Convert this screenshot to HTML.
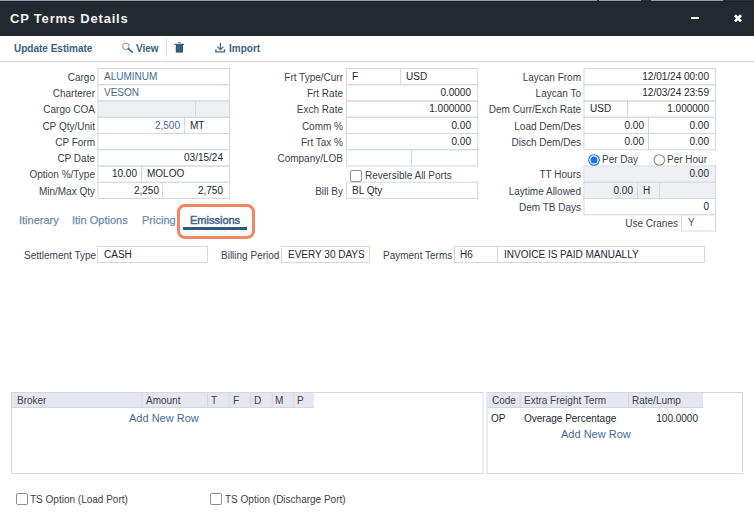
<!DOCTYPE html><html><head><meta charset="utf-8"><style>
html,body{margin:0;padding:0;}
body{width:754px;height:514px;position:relative;overflow:hidden;background:#fff;font-family:"Liberation Sans", sans-serif;}
.bx{position:absolute;box-sizing:border-box;border:1px solid #d4d9e1;}
.ln{position:absolute;}
.t{position:absolute;white-space:nowrap;line-height:12px;}
</style></head><body>
<div class="ln" style="left:0;top:0;width:754px;height:36px;background:#232930"></div>
<div class="ln" style="left:0;top:0;width:754px;height:1px;background:#989ca0"></div>
<div class="ln" style="left:0;top:1px;width:754px;height:1px;background:#1b2228"></div>
<div class="ln" style="left:597px;top:0;width:2px;height:1px;background:#2a3238"></div>
<div class="ln" style="left:641px;top:0;width:10px;height:1px;background:#2a3238"></div>
<div class="ln" style="left:723px;top:0;width:31px;height:1px;background:#2a3238"></div>
<div class="t" style="left:10px;top:11px;color:#f2f4f6;font-size:13px;font-weight:bold;line-height:15px;letter-spacing:0.8px">CP Terms Details</div>
<div class="ln" style="left:691px;top:17px;width:8px;height:2px;background:#fff"></div>
<svg style="position:absolute;left:732px;top:13px" width="12" height="11" viewBox="0 0 12 11"><path d="M2.9 2.3 L9.0 8.4 M9.0 2.3 L2.9 8.4" stroke="#fff" stroke-width="2.7" stroke-linecap="butt"/></svg>
<div class="t" style="left:14px;top:43px;color:#3b5f80;font-size:10px;font-weight:bold;">Update Estimate</div>
<svg style="position:absolute;left:118px;top:40px" width="20" height="15" viewBox="0 0 20 15"><circle cx="7.9" cy="6.3" r="3.3" fill="none" stroke="#7d90b0" stroke-width="1"/><path d="M10.3 8.6 L14.4 12.3" stroke="#3e5f80" stroke-width="1.5" stroke-linecap="round"/></svg>
<div class="t" style="left:136px;top:43px;color:#3b5f80;font-size:10px;font-weight:bold;">View</div>
<div class="ln" style="left:166px;top:39px;width:1px;height:18px;background:#d9dde3"></div>
<svg style="position:absolute;left:170px;top:40px" width="20" height="15" viewBox="0 0 20 15"><rect x="7.9" y="2" width="3" height="1.2" fill="#7f95ad"/><rect x="4.4" y="3.8" width="9.6" height="1.1" fill="#2f5575"/><rect x="5.8" y="4.8" width="7.2" height="7.8" fill="#2f5575"/><rect x="7.2" y="6" width="0.6" height="5.5" fill="#4d7290"/><rect x="9.1" y="6" width="0.6" height="5.5" fill="#4d7290"/><rect x="10.9" y="6" width="0.6" height="5.5" fill="#4d7290"/></svg>
<svg style="position:absolute;left:210px;top:40px" width="20" height="15" viewBox="0 0 20 15"><path d="M10.4 2.8 V9.3" stroke="#3b6288" stroke-width="1.2"/><path d="M7.3 6.6 L10.4 9.6 L13.4 6.6" stroke="#3b6288" stroke-width="1.2" fill="none"/><path d="M5.9 9.3 V11.9 H14.5 V9.3" stroke="#4a6585" stroke-width="1.4" fill="none" stroke-linejoin="round"/></svg>
<div class="t" style="left:229px;top:43px;color:#3b5f80;font-size:10px;font-weight:bold;">Import</div>
<div class="ln" style="left:0;top:61px;width:754px;height:1px;background:#cdd3da"></div>
<svg style="position:absolute;left:0;top:0" width="754" height="514"><rect x="97.5" y="68.0" width="132.5" height="1" fill="#d4d9e1"/><rect x="97.5" y="84.25" width="132.5" height="1" fill="#d4d9e1"/><rect x="97.5" y="68.0" width="1" height="17.25" fill="#d4d9e1"/><rect x="229" y="68.0" width="1" height="17.25" fill="#d4d9e1"/><rect x="97.5" y="84.25" width="132.5" height="1" fill="#d4d9e1"/><rect x="97.5" y="100.5" width="132.5" height="1" fill="#d4d9e1"/><rect x="97.5" y="84.25" width="1" height="17.25" fill="#d4d9e1"/><rect x="229" y="84.25" width="1" height="17.25" fill="#d4d9e1"/><rect x="98.5" y="101.5" width="130.5" height="15.25" fill="#eef0f3"/><rect x="97.5" y="100.5" width="132.5" height="1" fill="#d4d9e1"/><rect x="97.5" y="116.75" width="132.5" height="1" fill="#d4d9e1"/><rect x="97.5" y="100.5" width="1" height="17.25" fill="#d4d9e1"/><rect x="229" y="100.5" width="1" height="17.25" fill="#d4d9e1"/><rect x="97.5" y="116.75" width="132.5" height="1" fill="#d4d9e1"/><rect x="97.5" y="133.0" width="132.5" height="1" fill="#d4d9e1"/><rect x="97.5" y="116.75" width="1" height="17.25" fill="#d4d9e1"/><rect x="229" y="116.75" width="1" height="17.25" fill="#d4d9e1"/><rect x="97.5" y="133.0" width="132.5" height="1" fill="#d4d9e1"/><rect x="97.5" y="149.25" width="132.5" height="1" fill="#d4d9e1"/><rect x="97.5" y="133.0" width="1" height="17.25" fill="#d4d9e1"/><rect x="229" y="133.0" width="1" height="17.25" fill="#d4d9e1"/><rect x="97.5" y="149.25" width="132.5" height="1" fill="#d4d9e1"/><rect x="97.5" y="165.5" width="132.5" height="1" fill="#d4d9e1"/><rect x="97.5" y="149.25" width="1" height="17.25" fill="#d4d9e1"/><rect x="229" y="149.25" width="1" height="17.25" fill="#d4d9e1"/><rect x="97.5" y="165.5" width="132.5" height="1" fill="#d4d9e1"/><rect x="97.5" y="181.75" width="132.5" height="1" fill="#d4d9e1"/><rect x="97.5" y="165.5" width="1" height="17.25" fill="#d4d9e1"/><rect x="229" y="165.5" width="1" height="17.25" fill="#d4d9e1"/><rect x="97.5" y="181.75" width="132.5" height="1" fill="#d4d9e1"/><rect x="97.5" y="198.0" width="132.5" height="1" fill="#d4d9e1"/><rect x="97.5" y="181.75" width="1" height="17.25" fill="#d4d9e1"/><rect x="229" y="181.75" width="1" height="17.25" fill="#d4d9e1"/><rect x="195" y="100.5" width="1" height="17.25" fill="#d4d9e1"/><rect x="184" y="116.75" width="1" height="17.25" fill="#d4d9e1"/><rect x="141" y="165.5" width="1" height="17.25" fill="#d4d9e1"/><rect x="162" y="181.75" width="1" height="17.25" fill="#d4d9e1"/><rect x="346" y="68.0" width="132.25" height="1" fill="#d4d9e1"/><rect x="346" y="84.25" width="132.25" height="1" fill="#d4d9e1"/><rect x="346" y="68.0" width="1" height="17.25" fill="#d4d9e1"/><rect x="477.25" y="68.0" width="1" height="17.25" fill="#d4d9e1"/><rect x="346" y="84.25" width="132.25" height="1" fill="#d4d9e1"/><rect x="346" y="100.5" width="132.25" height="1" fill="#d4d9e1"/><rect x="346" y="84.25" width="1" height="17.25" fill="#d4d9e1"/><rect x="477.25" y="84.25" width="1" height="17.25" fill="#d4d9e1"/><rect x="346" y="100.5" width="132.25" height="1" fill="#d4d9e1"/><rect x="346" y="116.75" width="132.25" height="1" fill="#d4d9e1"/><rect x="346" y="100.5" width="1" height="17.25" fill="#d4d9e1"/><rect x="477.25" y="100.5" width="1" height="17.25" fill="#d4d9e1"/><rect x="346" y="116.75" width="132.25" height="1" fill="#d4d9e1"/><rect x="346" y="133.0" width="132.25" height="1" fill="#d4d9e1"/><rect x="346" y="116.75" width="1" height="17.25" fill="#d4d9e1"/><rect x="477.25" y="116.75" width="1" height="17.25" fill="#d4d9e1"/><rect x="346" y="133.0" width="132.25" height="1" fill="#d4d9e1"/><rect x="346" y="149.25" width="132.25" height="1" fill="#d4d9e1"/><rect x="346" y="133.0" width="1" height="17.25" fill="#d4d9e1"/><rect x="477.25" y="133.0" width="1" height="17.25" fill="#d4d9e1"/><rect x="346" y="149.25" width="132.25" height="1" fill="#d4d9e1"/><rect x="346" y="165.5" width="132.25" height="1" fill="#d4d9e1"/><rect x="346" y="149.25" width="1" height="17.25" fill="#d4d9e1"/><rect x="477.25" y="149.25" width="1" height="17.25" fill="#d4d9e1"/><rect x="400" y="68.0" width="1" height="17.25" fill="#d4d9e1"/><rect x="411" y="149.25" width="1" height="17.25" fill="#d4d9e1"/><rect x="346" y="181.75" width="132.25" height="1" fill="#d4d9e1"/><rect x="346" y="198.0" width="132.25" height="1" fill="#d4d9e1"/><rect x="346" y="181.75" width="1" height="17.25" fill="#d4d9e1"/><rect x="477.25" y="181.75" width="1" height="17.25" fill="#d4d9e1"/><rect x="583.5" y="68.0" width="132.5" height="1" fill="#d4d9e1"/><rect x="583.5" y="84.25" width="132.5" height="1" fill="#d4d9e1"/><rect x="583.5" y="68.0" width="1" height="17.25" fill="#d4d9e1"/><rect x="715" y="68.0" width="1" height="17.25" fill="#d4d9e1"/><rect x="583.5" y="84.25" width="132.5" height="1" fill="#d4d9e1"/><rect x="583.5" y="100.5" width="132.5" height="1" fill="#d4d9e1"/><rect x="583.5" y="84.25" width="1" height="17.25" fill="#d4d9e1"/><rect x="715" y="84.25" width="1" height="17.25" fill="#d4d9e1"/><rect x="583.5" y="100.5" width="132.5" height="1" fill="#d4d9e1"/><rect x="583.5" y="116.75" width="132.5" height="1" fill="#d4d9e1"/><rect x="583.5" y="100.5" width="1" height="17.25" fill="#d4d9e1"/><rect x="715" y="100.5" width="1" height="17.25" fill="#d4d9e1"/><rect x="583.5" y="116.75" width="132.5" height="1" fill="#d4d9e1"/><rect x="583.5" y="133.0" width="132.5" height="1" fill="#d4d9e1"/><rect x="583.5" y="116.75" width="1" height="17.25" fill="#d4d9e1"/><rect x="715" y="116.75" width="1" height="17.25" fill="#d4d9e1"/><rect x="583.5" y="133.0" width="132.5" height="1" fill="#d4d9e1"/><rect x="583.5" y="149.25" width="132.5" height="1" fill="#d4d9e1"/><rect x="583.5" y="133.0" width="1" height="17.25" fill="#d4d9e1"/><rect x="715" y="133.0" width="1" height="17.25" fill="#d4d9e1"/><rect x="584.5" y="166.5" width="130.5" height="15.25" fill="#eef0f3"/><rect x="583.5" y="165.5" width="132.5" height="1" fill="#d4d9e1"/><rect x="583.5" y="181.75" width="132.5" height="1" fill="#d4d9e1"/><rect x="583.5" y="165.5" width="1" height="17.25" fill="#d4d9e1"/><rect x="715" y="165.5" width="1" height="17.25" fill="#d4d9e1"/><rect x="584.5" y="182.75" width="130.5" height="15.25" fill="#eef0f3"/><rect x="583.5" y="181.75" width="132.5" height="1" fill="#d4d9e1"/><rect x="583.5" y="198.0" width="132.5" height="1" fill="#d4d9e1"/><rect x="583.5" y="181.75" width="1" height="17.25" fill="#d4d9e1"/><rect x="715" y="181.75" width="1" height="17.25" fill="#d4d9e1"/><rect x="583.5" y="198.0" width="132.5" height="1" fill="#d4d9e1"/><rect x="583.5" y="214.25" width="132.5" height="1" fill="#d4d9e1"/><rect x="583.5" y="198.0" width="1" height="17.25" fill="#d4d9e1"/><rect x="715" y="198.0" width="1" height="17.25" fill="#d4d9e1"/><rect x="627" y="100.5" width="1" height="17.25" fill="#d4d9e1"/><rect x="648" y="116.75" width="1" height="17.25" fill="#d4d9e1"/><rect x="648" y="133.0" width="1" height="17.25" fill="#d4d9e1"/><rect x="637" y="181.75" width="1" height="17.25" fill="#d4d9e1"/><rect x="659" y="181.75" width="1" height="17.25" fill="#d4d9e1"/><rect x="681" y="214.25" width="35" height="1" fill="#d4d9e1"/><rect x="681" y="230.5" width="35" height="1" fill="#d4d9e1"/><rect x="681" y="214.25" width="1" height="17.25" fill="#d4d9e1"/><rect x="715" y="214.25" width="1" height="17.25" fill="#d4d9e1"/></svg>
<div class="t" style="right:659px;top:72px;color:#3b3f4a;font-size:10px;font-weight:normal;text-align:right;">Cargo</div>
<div class="t" style="right:659px;top:88px;color:#3b3f4a;font-size:10px;font-weight:normal;text-align:right;">Charterer</div>
<div class="t" style="right:659px;top:104px;color:#3b3f4a;font-size:10px;font-weight:normal;text-align:right;">Cargo COA</div>
<div class="t" style="right:659px;top:121px;color:#3b3f4a;font-size:10px;font-weight:normal;text-align:right;">CP Qty/Unit</div>
<div class="t" style="right:659px;top:137px;color:#3b3f4a;font-size:10px;font-weight:normal;text-align:right;">CP Form</div>
<div class="t" style="right:659px;top:153px;color:#3b3f4a;font-size:10px;font-weight:normal;text-align:right;">CP Date</div>
<div class="t" style="right:659px;top:169px;color:#3b3f4a;font-size:10px;font-weight:normal;text-align:right;">Option %/Type</div>
<div class="t" style="right:659px;top:186px;color:#3b3f4a;font-size:10px;font-weight:normal;text-align:right;">Min/Max Qty</div>
<div class="t" style="left:104px;top:71px;color:#466d95;font-size:10px;font-weight:normal;">ALUMINUM</div>
<div class="t" style="left:104px;top:87px;color:#466d95;font-size:10px;font-weight:normal;">VESON</div>
<div class="t" style="right:574px;top:120px;color:#466d95;font-size:10px;font-weight:normal;text-align:right;">2,500</div>
<div class="t" style="left:190px;top:120px;color:#222831;font-size:10px;font-weight:normal;">MT</div>
<div class="t" style="right:531px;top:152px;color:#222831;font-size:10px;font-weight:normal;text-align:right;">03/15/24</div>
<div class="t" style="right:617px;top:168px;color:#222831;font-size:10px;font-weight:normal;text-align:right;">10.00</div>
<div class="t" style="left:147px;top:168px;color:#222831;font-size:10px;font-weight:normal;">MOLOO</div>
<div class="t" style="right:595px;top:185px;color:#222831;font-size:10px;font-weight:normal;text-align:right;">2,250</div>
<div class="t" style="right:531px;top:185px;color:#222831;font-size:10px;font-weight:normal;text-align:right;">2,750</div>
<div class="t" style="right:411px;top:72px;color:#3b3f4a;font-size:10px;font-weight:normal;text-align:right;">Frt Type/Curr</div>
<div class="t" style="right:411px;top:88px;color:#3b3f4a;font-size:10px;font-weight:normal;text-align:right;">Frt Rate</div>
<div class="t" style="right:411px;top:104px;color:#3b3f4a;font-size:10px;font-weight:normal;text-align:right;">Exch Rate</div>
<div class="t" style="right:411px;top:121px;color:#3b3f4a;font-size:10px;font-weight:normal;text-align:right;">Comm %</div>
<div class="t" style="right:411px;top:137px;color:#3b3f4a;font-size:10px;font-weight:normal;text-align:right;">Frt Tax %</div>
<div class="t" style="right:411px;top:153px;color:#3b3f4a;font-size:10px;font-weight:normal;text-align:right;">Company/LOB</div>
<div class="t" style="left:352px;top:71px;color:#222831;font-size:10px;font-weight:normal;">F</div>
<div class="t" style="left:406px;top:71px;color:#222831;font-size:10px;font-weight:normal;">USD</div>
<div class="t" style="right:283px;top:87px;color:#222831;font-size:10px;font-weight:normal;text-align:right;">0.0000</div>
<div class="t" style="right:283px;top:103px;color:#222831;font-size:10px;font-weight:normal;text-align:right;">1.000000</div>
<div class="t" style="right:283px;top:120px;color:#222831;font-size:10px;font-weight:normal;text-align:right;">0.00</div>
<div class="t" style="right:283px;top:136px;color:#222831;font-size:10px;font-weight:normal;text-align:right;">0.00</div>
<div class="bx" style="left:350px;top:170px;width:12px;height:12px;border-color:#8c9096;border-radius:2px"></div>
<div class="t" style="left:365px;top:170px;color:#3b3f4a;font-size:10px;font-weight:normal;">Reversible All Ports</div>
<div class="t" style="right:411px;top:186px;color:#3b3f4a;font-size:10px;font-weight:normal;text-align:right;">Bill By</div>
<div class="t" style="left:352px;top:185px;color:#222831;font-size:10px;font-weight:normal;">BL Qty</div>
<div class="t" style="right:173px;top:72px;color:#3b3f4a;font-size:10px;font-weight:normal;text-align:right;">Laycan From</div>
<div class="t" style="right:173px;top:88px;color:#3b3f4a;font-size:10px;font-weight:normal;text-align:right;">Laycan To</div>
<div class="t" style="right:173px;top:104px;color:#3b3f4a;font-size:10px;font-weight:normal;text-align:right;">Dem Curr/Exch Rate</div>
<div class="t" style="right:173px;top:121px;color:#3b3f4a;font-size:10px;font-weight:normal;text-align:right;">Load Dem/Des</div>
<div class="t" style="right:173px;top:137px;color:#3b3f4a;font-size:10px;font-weight:normal;text-align:right;">Disch Dem/Des</div>
<div class="t" style="right:173px;top:169px;color:#3b3f4a;font-size:10px;font-weight:normal;text-align:right;">TT Hours</div>
<div class="t" style="right:173px;top:186px;color:#3b3f4a;font-size:10px;font-weight:normal;text-align:right;">Laytime Allowed</div>
<div class="t" style="right:173px;top:202px;color:#3b3f4a;font-size:10px;font-weight:normal;text-align:right;">Dem TB Days</div>
<div class="t" style="right:45px;top:71px;color:#222831;font-size:10px;font-weight:normal;text-align:right;">12/01/24 00:00</div>
<div class="t" style="right:45px;top:87px;color:#222831;font-size:10px;font-weight:normal;text-align:right;">12/03/24 23:59</div>
<div class="t" style="left:590px;top:103px;color:#222831;font-size:10px;font-weight:normal;">USD</div>
<div class="t" style="right:45px;top:103px;color:#222831;font-size:10px;font-weight:normal;text-align:right;">1.000000</div>
<div class="t" style="right:110px;top:120px;color:#222831;font-size:10px;font-weight:normal;text-align:right;">0.00</div>
<div class="t" style="right:45px;top:120px;color:#222831;font-size:10px;font-weight:normal;text-align:right;">0.00</div>
<div class="t" style="right:110px;top:136px;color:#222831;font-size:10px;font-weight:normal;text-align:right;">0.00</div>
<div class="t" style="right:45px;top:136px;color:#222831;font-size:10px;font-weight:normal;text-align:right;">0.00</div>
<div class="t" style="right:45px;top:168px;color:#222831;font-size:10px;font-weight:normal;text-align:right;">0.00</div>
<div class="t" style="right:121px;top:185px;color:#222831;font-size:10px;font-weight:normal;text-align:right;">0.00</div>
<div class="t" style="left:643px;top:185px;color:#222831;font-size:10px;font-weight:normal;">H</div>
<div class="t" style="right:45px;top:201px;color:#222831;font-size:10px;font-weight:normal;text-align:right;">0</div>
<svg style="position:absolute;left:586px;top:152px" width="16" height="16" viewBox="0 0 16 16"><circle cx="8" cy="8" r="5.3" fill="#fff" stroke="#1a73e8" stroke-width="1.1"/><circle cx="8" cy="8" r="3.5" fill="#1a73e8"/></svg>
<div class="t" style="left:602px;top:154px;color:#3b3f4a;font-size:10px;font-weight:normal;">Per Day</div>
<svg style="position:absolute;left:651px;top:152px" width="16" height="16" viewBox="0 0 16 16"><circle cx="8.3" cy="8" r="5.3" fill="#fff" stroke="#858a90" stroke-width="1.1"/></svg>
<div class="t" style="left:667px;top:154px;color:#3b3f4a;font-size:10px;font-weight:normal;">Per Hour</div>
<div class="t" style="right:76px;top:218px;color:#3b3f4a;font-size:10px;font-weight:normal;text-align:right;">Use Cranes</div>
<div class="t" style="left:688px;top:217px;color:#555;font-size:10px;font-weight:normal;">Y</div>
<div class="t" style="left:19px;top:214px;color:#6d8eab;font-size:11px;font-weight:normal;-webkit-text-stroke:0.25px #6d8eab">Itinerary</div>
<div class="t" style="left:72px;top:214px;color:#6d8eab;font-size:11px;font-weight:normal;-webkit-text-stroke:0.25px #6d8eab">Itin Options</div>
<div class="t" style="left:142px;top:214px;color:#6d8eab;font-size:11px;font-weight:normal;-webkit-text-stroke:0.25px #6d8eab">Pricing</div>
<div class="t" style="left:190px;top:214px;color:#3d6485;font-size:11px;font-weight:normal;-webkit-text-stroke:0.45px #3d6485">Emissions</div>
<div class="ln" style="left:183px;top:227px;width:64px;height:3px;background:#2d5b7c"></div>
<div class="ln" style="left:177px;top:204px;width:78px;height:35px;box-sizing:border-box;border:3.6px solid #f3865e;border-radius:8px"></div>
<div class="t" style="left:24px;top:250px;color:#3b3f4a;font-size:10px;font-weight:normal;">Settlement Type</div>
<div class="bx" style="left:97px;top:246px;width:111px;height:17px;background:#fff;"></div>
<div class="t" style="left:104px;top:249px;color:#222831;font-size:10px;font-weight:normal;">CASH</div>
<div class="t" style="left:221px;top:250px;color:#3b3f4a;font-size:10px;font-weight:normal;">Billing Period</div>
<div class="bx" style="left:281px;top:246px;width:89px;height:17px;background:#fff;"></div>
<div class="t" style="left:288px;top:249px;color:#222831;font-size:10px;font-weight:normal;">EVERY 30 DAYS</div>
<div class="t" style="left:383px;top:250px;color:#3b3f4a;font-size:10px;font-weight:normal;">Payment Terms</div>
<div class="bx" style="left:454px;top:246px;width:251px;height:17px;background:#fff;"></div>
<div class="ln" style="left:497px;top:246px;width:1px;height:17px;background:#d4d9e1"></div>
<div class="t" style="left:460px;top:249px;color:#222831;font-size:10px;font-weight:normal;">H6</div>
<div class="t" style="left:504px;top:249px;color:#222831;font-size:10px;font-weight:normal;">INVOICE IS PAID MANUALLY</div>
<svg style="position:absolute;left:0;top:0" width="754" height="514"><rect x="12" y="393" width="302" height="14" fill="#e5e7f0"/><rect x="12" y="407" width="302" height="1" fill="#d3d7df"/><rect x="141.5" y="393" width="1" height="14" fill="#d3d7df"/><rect x="207" y="393" width="1" height="14" fill="#d3d7df"/><rect x="228.6" y="393" width="1" height="14" fill="#d3d7df"/><rect x="250.2" y="393" width="1" height="14" fill="#d3d7df"/><rect x="271.8" y="393" width="1" height="14" fill="#d3d7df"/><rect x="293.3" y="393" width="1" height="14" fill="#d3d7df"/><rect x="11" y="392" width="472.5" height="1" fill="#d4d9e1"/><rect x="11" y="473" width="472.5" height="1" fill="#d4d9e1"/><rect x="11" y="392" width="1" height="82" fill="#d4d9e1"/><rect x="482.5" y="392" width="1" height="82" fill="#d4d9e1"/><rect x="487.5" y="393" width="215.5" height="14" fill="#e5e7f0"/><rect x="487.5" y="407" width="215.5" height="1" fill="#d3d7df"/><rect x="519.7" y="393" width="1" height="14" fill="#d3d7df"/><rect x="628" y="393" width="1" height="14" fill="#d3d7df"/><rect x="486.5" y="392" width="256.5" height="1" fill="#d4d9e1"/><rect x="486.5" y="473" width="256.5" height="1" fill="#d4d9e1"/><rect x="486.5" y="392" width="1" height="82" fill="#d4d9e1"/><rect x="742" y="392" width="1" height="82" fill="#d4d9e1"/></svg>
<div class="t" style="left:17px;top:395px;color:#3a3f48;font-size:10px;font-weight:normal;">Broker</div>
<div class="t" style="left:146px;top:395px;color:#3a3f48;font-size:10px;font-weight:normal;">Amount</div>
<div class="t" style="left:211px;top:395px;color:#3a3f48;font-size:10px;font-weight:normal;">T</div>
<div class="t" style="left:233px;top:395px;color:#3a3f48;font-size:10px;font-weight:normal;">F</div>
<div class="t" style="left:254px;top:395px;color:#3a3f48;font-size:10px;font-weight:normal;">D</div>
<div class="t" style="left:275px;top:395px;color:#3a3f48;font-size:10px;font-weight:normal;">M</div>
<div class="t" style="left:297px;top:395px;color:#3a3f48;font-size:10px;font-weight:normal;">P</div>
<div class="t" style="left:129px;top:412px;color:#466d95;font-size:11px;font-weight:normal;">Add New Row</div>
<div class="t" style="left:492px;top:395px;color:#3a3f48;font-size:10px;font-weight:normal;">Code</div>
<div class="t" style="left:524px;top:395px;color:#3a3f48;font-size:10px;font-weight:normal;">Extra Freight Term</div>
<div class="t" style="left:632px;top:395px;color:#3a3f48;font-size:10px;font-weight:normal;">Rate/Lump</div>
<div class="t" style="left:491px;top:413px;color:#222831;font-size:10px;font-weight:normal;">OP</div>
<div class="t" style="left:524px;top:413px;color:#222831;font-size:10px;font-weight:normal;">Overage Percentage</div>
<div class="t" style="right:56px;top:413px;color:#222831;font-size:10px;font-weight:normal;text-align:right;">100.0000</div>
<div class="t" style="left:561px;top:428px;color:#466d95;font-size:11px;font-weight:normal;">Add New Row</div>
<div class="bx" style="left:16px;top:493px;width:12px;height:12px;border-color:#8c9096;border-radius:2px"></div>
<div class="t" style="left:30px;top:494px;color:#3b3f4a;font-size:10px;font-weight:normal;">TS Option (Load Port)</div>
<div class="bx" style="left:210px;top:493px;width:12px;height:12px;border-color:#8c9096;border-radius:2px"></div>
<div class="t" style="left:225px;top:494px;color:#3b3f4a;font-size:10px;font-weight:normal;">TS Option (Discharge Port)</div>
</body></html>
